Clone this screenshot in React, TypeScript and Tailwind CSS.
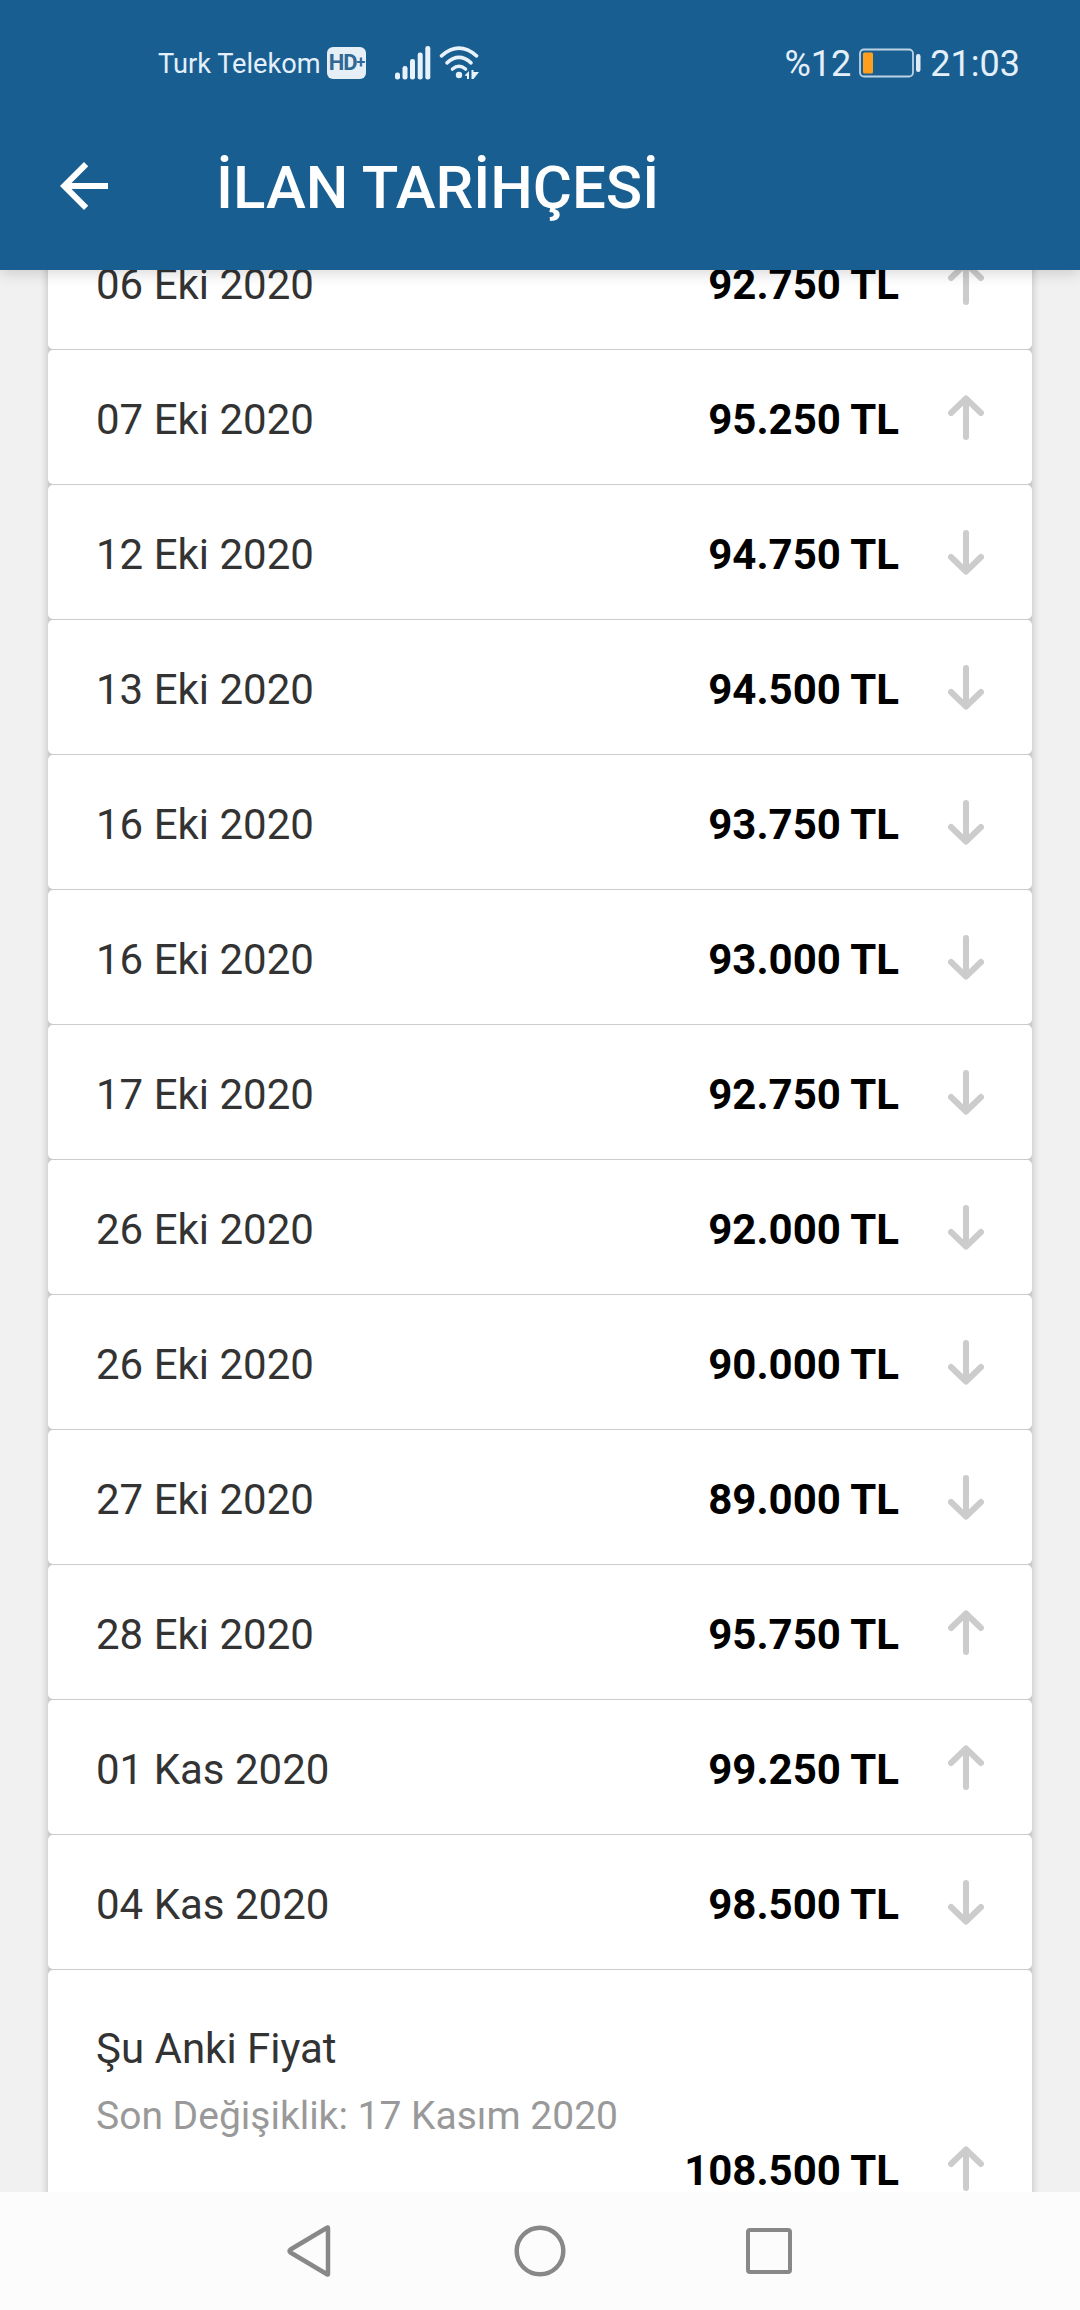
import React from "react";

type Direction = "up" | "down";

type Entry = { date: string; price: string; direction: Direction };

const entries: Entry[] = [
  { date: "06 Eki 2020", price: "92.750 TL", direction: "up" },
  { date: "07 Eki 2020", price: "95.250 TL", direction: "up" },
  { date: "12 Eki 2020", price: "94.750 TL", direction: "down" },
  { date: "13 Eki 2020", price: "94.500 TL", direction: "down" },
  { date: "16 Eki 2020", price: "93.750 TL", direction: "down" },
  { date: "16 Eki 2020", price: "93.000 TL", direction: "down" },
  { date: "17 Eki 2020", price: "92.750 TL", direction: "down" },
  { date: "26 Eki 2020", price: "92.000 TL", direction: "down" },
  { date: "26 Eki 2020", price: "90.000 TL", direction: "down" },
  { date: "27 Eki 2020", price: "89.000 TL", direction: "down" },
  { date: "28 Eki 2020", price: "95.750 TL", direction: "up" },
  { date: "01 Kas 2020", price: "99.250 TL", direction: "up" },
  { date: "04 Kas 2020", price: "98.500 TL", direction: "down" },
];

function Arrow({ direction }: { direction: Direction }) {
  return (
    <svg width="36" height="45" viewBox="0 0 36 45" fill="none" stroke="#cccccc" strokeWidth="6" strokeLinecap="round" strokeLinejoin="round">
      <path d={direction === "up" ? "M18 42V4M3 18L18 3.5L33 18" : "M18 3V41M3 27L18 41.5L33 27"} />
    </svg>
  );
}

function StatusBar() {
  return (
    <div className="flex h-[124px] items-center justify-between pt-0.5 pr-[60px] pl-[158px] text-[#e4eff9]">
      <div className="flex items-center">
        <span className="w-[162px] pt-px text-[27.2px] leading-8 whitespace-nowrap">Turk Telekom</span>
        <span className="ml-[7px] flex h-8 w-[39px] items-center justify-center rounded-md bg-[#e6eef6] text-[22px] leading-8 font-bold tracking-tighter text-[#2f6795]">
          HD<span className="text-[16px]">+</span>
        </span>
        <svg className="ml-[29px]" width="36" height="34" viewBox="0 0 36 34" fill="#e8f2fb">
          <rect x="0" y="26.500" width="5" height="7" rx="2.300" />
          <rect x="7.500" y="20" width="5" height="13.500" rx="2.300" />
          <rect x="15" y="13" width="5" height="20.500" rx="2.300" />
          <rect x="22.700" y="6.500" width="5" height="27" rx="2.300" />
          <rect x="30.300" y="0" width="5" height="33.500" rx="2.300" />
        </svg>
        <svg className="ml-2" width="42" height="34" viewBox="0 0 42 34" fill="none" stroke="#e8f2fb" strokeWidth="3.600" strokeLinecap="round">
          <path d="M2.500 9.800Q20 -5.500 37.500 9.800" />
          <path d="M8 16.800Q20 6 32 16.800" />
          <path d="M13.500 23Q20 17.500 26.500 23" />
          <circle cx="20" cy="29" r="3.200" fill="#e8f2fb" stroke="none" />
          <path d="M25.500 29.500L30 25V33H28V30ZM32.500 24V33H34.500L40 26H34.500V24Z" fill="#e8f2fb" stroke="none" />
        </svg>
      </div>
      <div className="flex items-center">
        <span className="pt-px text-[36px] leading-10">%12</span>
        <svg className="ml-2" width="62" height="30" viewBox="0 0 62 30">
          <rect x="1" y="1.500" width="53" height="27" rx="4" fill="none" stroke="#bcd3e6" strokeWidth="1.800" />
          <rect x="4" y="4.500" width="10" height="21" rx="1.500" fill="#ff9f1c" />
          <rect x="57" y="6" width="4.500" height="18" rx="2.200" fill="#dfeaf5" />
        </svg>
        <span className="ml-[9px] pt-px text-[36px] leading-10">21:03</span>
      </div>
    </div>
  );
}

function AppBar() {
  return (
    <div className="flex h-[146px] items-start pl-[60px]">
      <svg className="mt-[38px]" width="48" height="48" viewBox="0 0 48 48" fill="#ffffff">
        <path d="M48 21H11.490L28.260 4.230L24 0L0 24L24 48L28.230 43.770L11.490 27H48V21Z" />
      </svg>
      <h1 className="mt-[29px] ml-[108px] text-[60px] leading-[70px] font-medium text-white">İLAN TARİHÇESİ</h1>
    </div>
  );
}

function HistoryRow({ date, price, direction }: Entry) {
  return (
    <li className="flex h-[134px] items-center rounded-[5px] bg-white px-12 pt-px">
      <span className="grow pt-[5px] text-[42px] leading-[50px] text-[#333333]">{date}</span>
      <span className="mr-[49px] pt-[5px] text-[42px] leading-[50px] font-bold text-black">{price}</span>
      <Arrow direction={direction} />
    </li>
  );
}

function CurrentPrice() {
  return (
    <li className="flex h-[280px] flex-col rounded-[5px] bg-white px-12 pt-[54px]">
      <span className="text-[42px] leading-[50px] text-[#333333]">Şu Anki Fiyat</span>
      <span className="mt-[19px] text-[39px] leading-[46px] text-[#999999]">Son Değişiklik: 17 Kasım 2020</span>
      <div className="mt-0.5 flex items-center justify-end">
        <span className="mr-[49px] pt-[5px] text-[42px] leading-[50px] font-bold text-black">108.500 TL</span>
        <Arrow direction="up" />
      </div>
    </li>
  );
}

function NavigationBar() {
  return (
    <nav className="flex h-[118px] shrink-0 items-center bg-[#fcfcfc] pl-[287px]">
      <svg width="44" height="52" viewBox="0 0 44 52" fill="none" stroke="#888888" strokeWidth="4.500" strokeLinejoin="round">
        <path d="M41 3V49Q41 50 40 49.300L3.500 27.500Q1.500 26 3.500 24.500L40 2.700Q41 2 41 3Z" />
      </svg>
      <svg className="mr-[180px] ml-[183px]" width="52" height="52" viewBox="0 0 52 52" fill="none" stroke="#888888" strokeWidth="4.500">
        <circle cx="26" cy="26" r="23.300" />
      </svg>
      <span className="size-[46px] rounded-[4px] border-4 border-[#888888]" />
    </nav>
  );
}

export default function App() {
  return (
    <div className="flex h-[2310px] w-[1080px] flex-col overflow-hidden bg-[#f1f1f1] font-['Roboto',sans-serif]">
      <header className="relative z-10 h-[270px] shrink-0 bg-[#195e91] shadow-[0_3px_14px_rgba(0,0,0,0.16)]">
        <StatusBar />
        <AppBar />
      </header>
      <main className="min-h-0 grow overflow-hidden px-12">
        <ul className="-mt-[55px] flex flex-col gap-px rounded-[5px] bg-[#cccccc] shadow-[0_2px_8px_rgba(0,0,0,0.24)]">
          {entries.map((entry, index) => (
            <HistoryRow key={index} {...entry} />
          ))}
          <CurrentPrice />
        </ul>
      </main>
      <NavigationBar />
    </div>
  );
}
